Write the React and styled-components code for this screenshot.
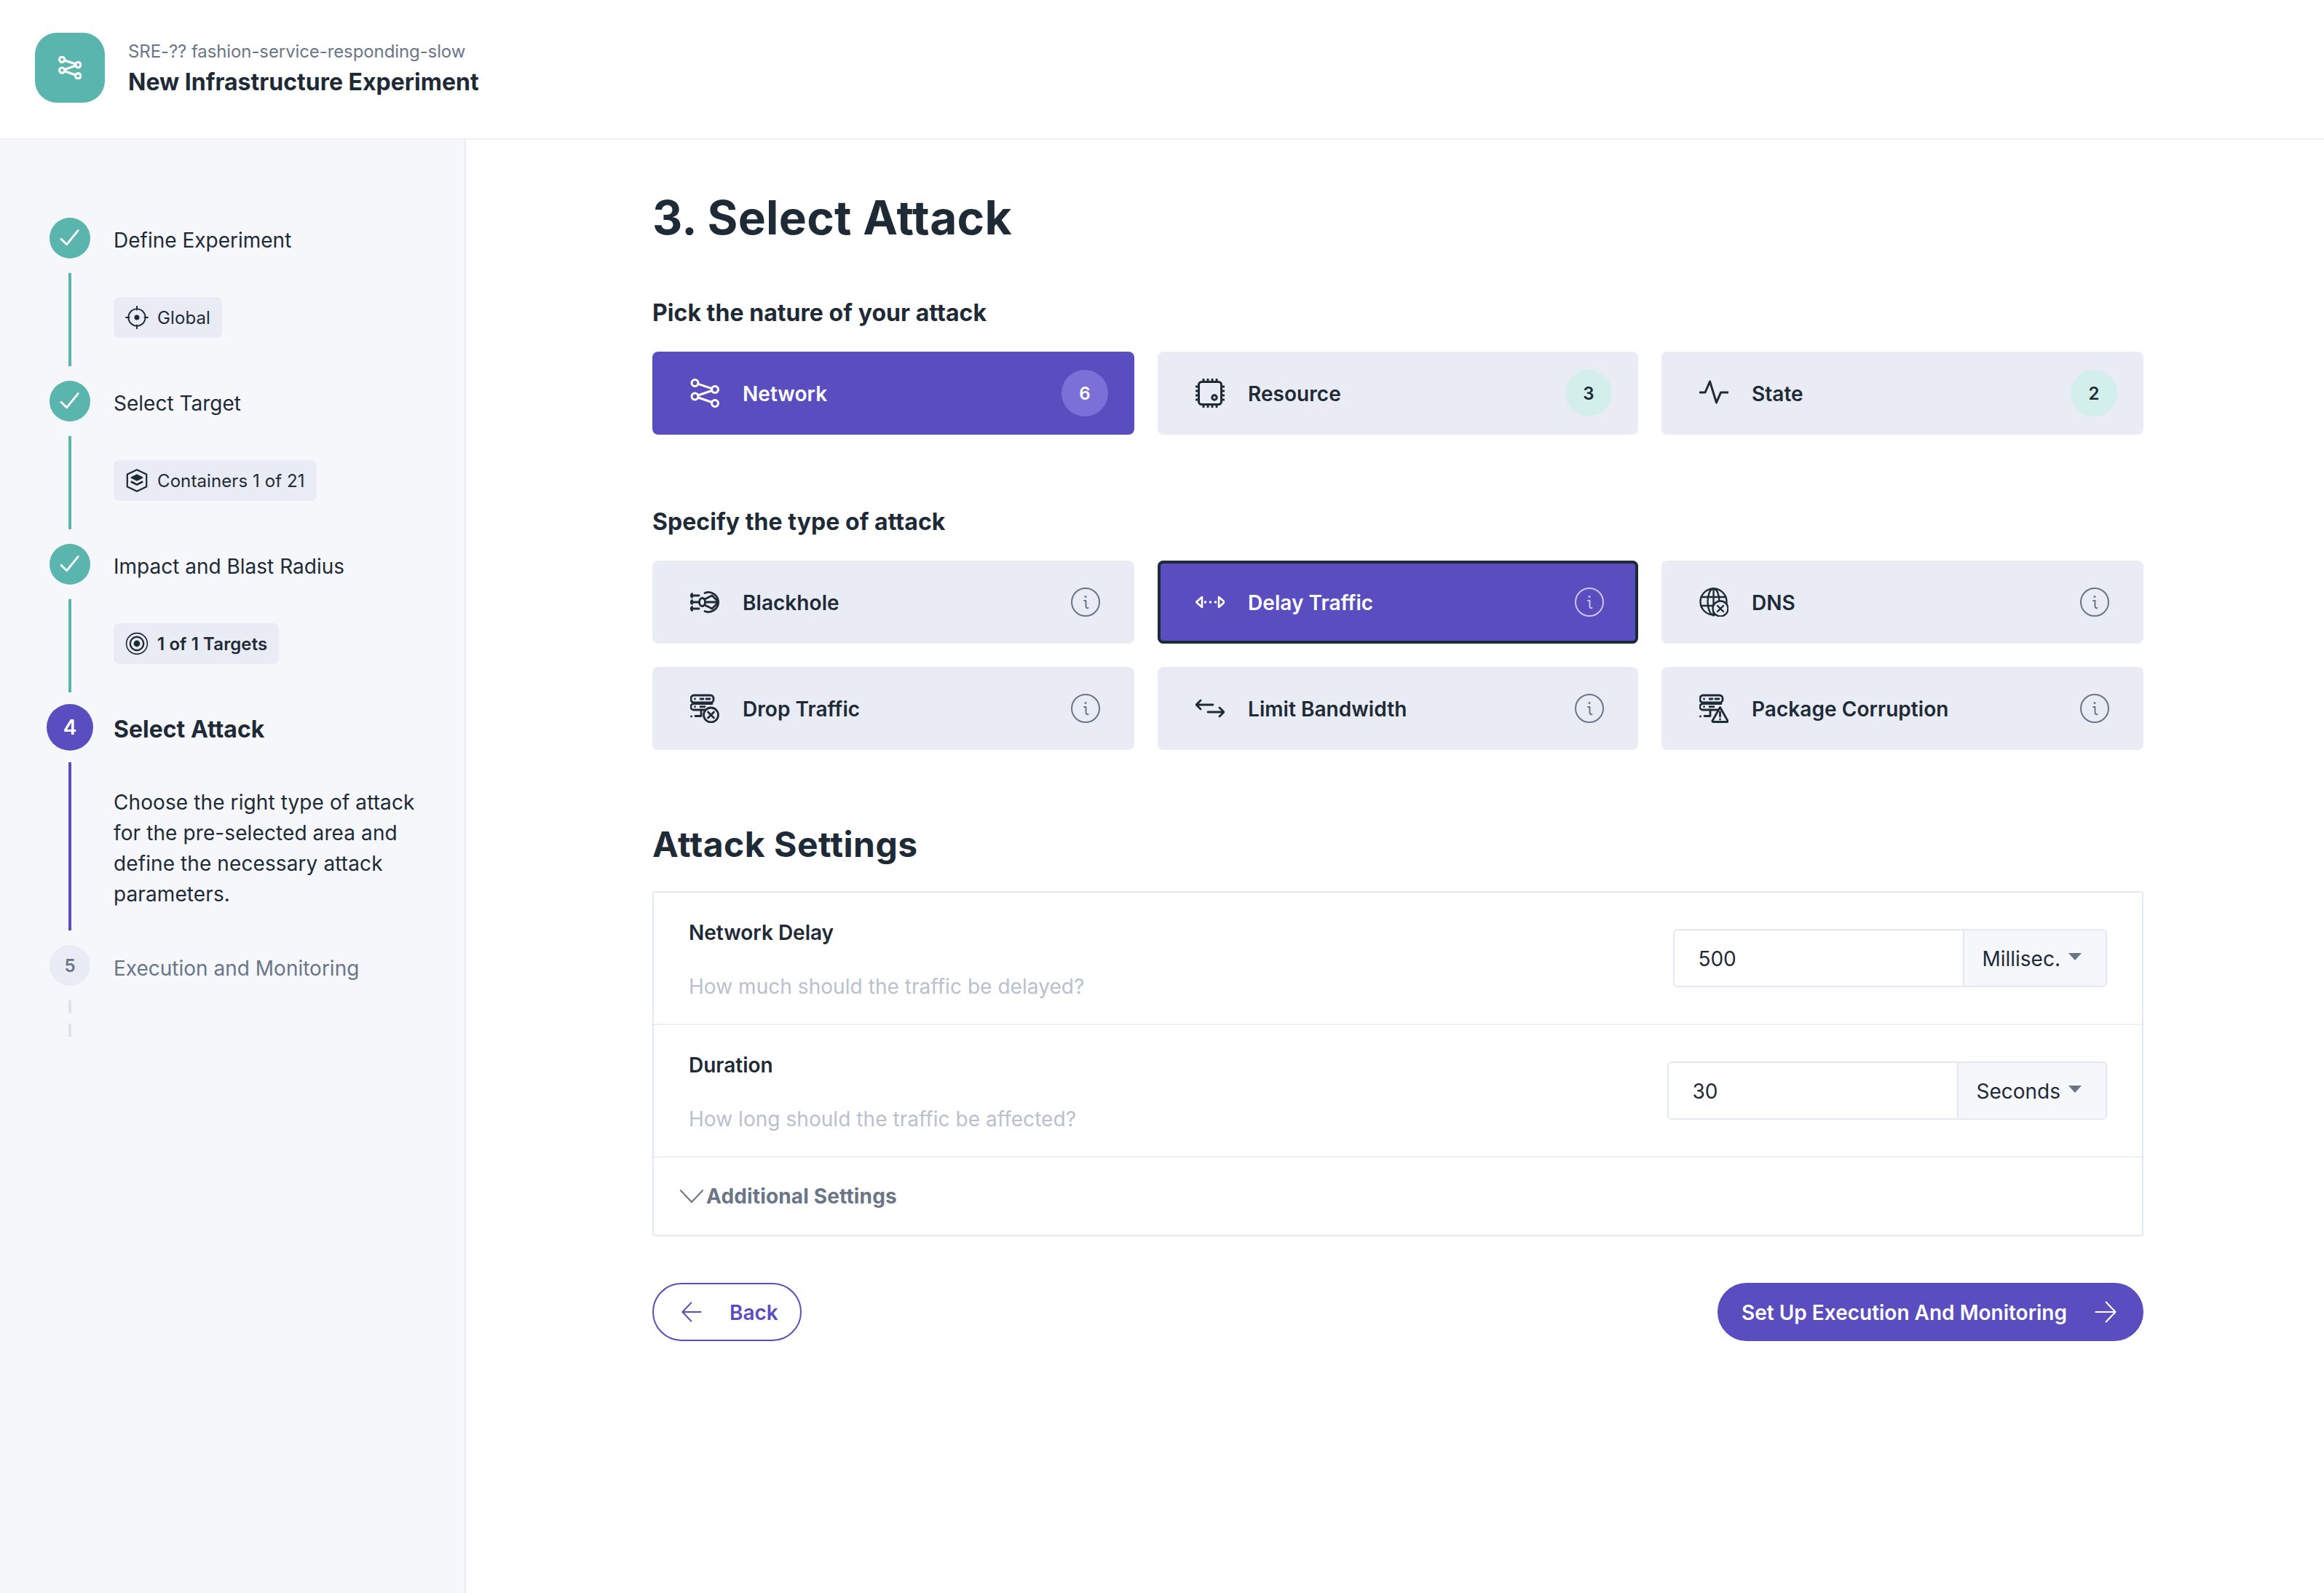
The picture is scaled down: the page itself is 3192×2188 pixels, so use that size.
import React from "react";
import styled, { createGlobalStyle } from "styled-components";

const PURPLE = "#594dc0";
const TEAL = "#5ab5ae";
const INK = "#1f2a37";
const MUTED = "#6a7688";
const CHIP = "#e9ecf4";
const LINE = "#e2e7f1";

const Global = createGlobalStyle`
  html, body { margin: 0; padding: 0; background: #fff; }
  body { font-family: Inter, "Liberation Sans", sans-serif; color: ${INK}; -webkit-font-smoothing: antialiased; }
  * { box-sizing: border-box; }
`;

const Page = styled.div`
  display: flex;
  flex-direction: column;
  width: 3192px;
  height: 2188px;
  overflow: hidden;
`;
const Header = styled.header`
  height: 192px;
  flex: none;
  display: flex;
  align-items: center;
  gap: 32px;
  padding: 0 48px 4px;
  border-bottom: 2px solid #eceff5;
`;
const Logo = styled.div`
  width: 96px;
  height: 96px;
  border-radius: 30px;
  background: ${TEAL};
  display: flex;
  align-items: center;
  justify-content: center;
  color: #fff;
`;
const HeaderText = styled.div`
  display: flex;
  flex-direction: column;
  gap: 5px;
  padding-top: 3px;
`;
const Crumb = styled.div`
  font-size: 24px;
  line-height: 32px;
  letter-spacing: -0.1px;
  color: ${MUTED};
`;
const HeaderTitle = styled.div`
  font-size: 32px;
  line-height: 42px;
  font-weight: 700;
  color: ${INK};
`;
const Body = styled.div`
  flex: 1;
  display: flex;
  min-height: 0;
`;
const Sidebar = styled.aside`
  width: 640px;
  flex: none;
  background: #f5f7fb;
  border-right: 2px solid #e9ecf4;
  padding: 107px 40px 0 64px;
`;
const Step = styled.div`
  display: grid;
  grid-template-columns: 64px 1fr;
  column-gap: 28px;
`;
const StepHead = styled.div`
  height: 56px;
  display: flex;
  align-items: center;
  justify-content: center;
`;
const Circle = styled.div`
  flex: none;
  width: ${(p) => (p.$kind === "active" ? 64 : 56)}px;
  height: ${(p) => (p.$kind === "active" ? 64 : 56)}px;
  border-radius: 50%;
  display: flex;
  align-items: center;
  justify-content: center;
  font-size: ${(p) => (p.$kind === "active" ? 28 : 24)}px;
  font-weight: 600;
  color: ${(p) => (p.$kind === "todo" ? MUTED : "#fff")};
  background: ${(p) =>
    p.$kind === "active" ? PURPLE : p.$kind === "todo" ? CHIP : TEAL};
`;
const StepLabel = styled.div`
  display: flex;
  align-items: center;
  height: 56px;
  padding-top: ${(p) => (p.$active ? 4 : p.$muted ? 8 : 6)}px;
  font-size: ${(p) => (p.$active ? 32 : 28)}px;
  font-weight: ${(p) => (p.$active ? 700 : 400)};
  color: ${(p) => (p.$muted ? MUTED : INK)};
`;
const Rail = styled.div`
  display: flex;
  justify-content: center;
  padding: 20px 0;
`;
const RailLine = styled.div`
  width: 4px;
  background: ${(p) => p.$color};
`;
const DashedRail = styled.div`
  width: 4px;
  height: 50px;
  background: repeating-linear-gradient(to bottom, #dde2ec 0 18px, transparent 18px 32px);
`;
const StepBody = styled.div`
  padding: ${(p) => (p.$desc ? "54px 0 49px" : "53px 0 0")};
  min-height: ${(p) => (p.$desc ? "auto" : "168px")};
`;
const Chip = styled.div`
  display: inline-flex;
  align-items: center;
  gap: 12px;
  height: 56px;
  padding: 0 16px;
  border-radius: 8px;
  background: ${CHIP};
  font-size: 24px;
  letter-spacing: 0.1px;
  font-weight: ${(p) => (p.$strong ? 600 : 400)};
  color: ${INK};
`;
const Desc = styled.div`
  font-size: 28px;
  line-height: 42px;
  letter-spacing: 0.1px;
  color: ${INK};
`;
const Main = styled.main`
  flex: 1;
  padding: 69px 248px 0 256px;
`;
const H1 = styled.h1`
  margin: 0 0 73px;
  font-size: 64px;
  line-height: 76px;
  font-weight: 700;
  letter-spacing: 0.3px;
  color: ${INK};
`;
const SectionLabel = styled.h3`
  margin: ${(p) => (p.$first ? "0" : "100px")} 0 33px;
  font-size: 32px;
  line-height: 40px;
  font-weight: 700;
  letter-spacing: 0.05px;
  color: ${INK};
`;
const CardGrid = styled.div`
  display: grid;
  grid-template-columns: 662px 660px 662px;
  gap: 32px;
`;
const Card = styled.div`
  height: 114px;
  display: flex;
  align-items: center;
  gap: 32px;
  padding: 0 36px 0 52px;
  border-radius: 8px;
  font-size: 28px;
  font-weight: 600;
  background: ${(p) => (p.$active ? PURPLE : CHIP)};
  color: ${(p) => (p.$active ? "#fff" : INK)};
  box-shadow: ${(p) => (p.$outlined ? `inset 0 0 0 4px ${INK}` : "none")};
`;
const CardName = styled.span`
  flex: 1;
  padding-top: 2px;
  letter-spacing: 0.05px;
`;
const Badge = styled.div`
  width: 64px;
  height: 64px;
  border-radius: 50%;
  display: flex;
  align-items: center;
  justify-content: center;
  font-size: 24px;
  font-weight: 600;
  background: ${(p) => (p.$active ? "#7a70d8" : "#d3efec")};
  color: ${(p) => (p.$active ? "#fff" : INK)};
`;
const InfoWrap = styled.div`
  display: flex;
  margin-right: 11px;
  color: ${(p) => (p.$active ? "#c9c5ee" : MUTED)};
`;
const H2 = styled.h2`
  margin: 102px 0 36px;
  font-size: 48px;
  line-height: 56px;
  font-weight: 700;
  letter-spacing: 0.5px;
  color: ${INK};
`;
const SettingsBox = styled.div`
  border: 2px solid ${LINE};
  border-radius: 4px;
`;
const SettingRow = styled.div`
  height: 182px;
  display: flex;
  align-items: center;
  justify-content: space-between;
  padding: 0 48px;
  border-bottom: 2px solid #eceff5;
`;
const SettingText = styled.div`
  display: flex;
  flex-direction: column;
  gap: 38px;
  padding-top: 4px;
`;
const SettingLabel = styled.div`
  font-size: 28px;
  line-height: 36px;
  font-weight: 600;
  color: ${INK};
`;
const SettingHint = styled.div`
  font-size: 28px;
  line-height: 36px;
  letter-spacing: 0.05px;
  color: #b9c0ce;
`;
const InputGroup = styled.div`
  display: flex;
  height: 80px;
  border: 2px solid ${LINE};
  border-radius: 6px;
  font-size: 28px;
  color: ${INK};
`;
const InputValue = styled.div`
  width: 398px;
  display: flex;
  align-items: center;
  padding: 2px 32px 0;
  border-right: 2px solid ${LINE};
`;
const Addon = styled.div`
  display: flex;
  align-items: center;
  gap: 11px;
  padding: 2px 33px 0 24px;
  background: #f5f7fb;
  border-radius: 0 4px 4px 0;
`;
const Caret = styled.span`
  width: 0;
  height: 0;
  margin-top: -6px;
  border-left: 9px solid transparent;
  border-right: 9px solid transparent;
  border-top: 10px solid ${MUTED};
`;
const Additional = styled.div`
  height: 106px;
  display: flex;
  align-items: center;
  gap: 4px;
  padding: 0 0 0 36px;
  font-size: 28px;
  font-weight: 700;
  letter-spacing: 0.15px;
  color: ${MUTED};
`;
const Footer = styled.div`
  display: flex;
  justify-content: space-between;
  margin-top: 64px;
`;
const Button = styled.button`
  height: 80px;
  display: flex;
  align-items: center;
  border-radius: 40px;
  font-family: inherit;
  font-size: 28px;
  font-weight: 600;
  border: 2px solid ${PURPLE};
  gap: 38px;
  padding: ${(p) => (p.$primary ? "0 35px 0 31px" : "0 30px 0 38px")};
  background: ${(p) => (p.$primary ? PURPLE : "#fff")};
  color: ${(p) => (p.$primary ? "#fff" : PURPLE)};
`;
const ButtonLabel = styled.span`
  padding-top: 2px;
`;

const Svg = ({ size = 40, children, fill = "none", sw = 3 }) => (
  <svg
    width={size}
    height={size}
    viewBox="0 0 40 40"
    fill={fill}
    stroke="currentColor"
    strokeWidth={sw}
    strokeLinecap="round"
    strokeLinejoin="round"
    style={{ flex: "none", display: "block" }}
  >
    {children}
  </svg>
);

const NetworkIcon = ({ size, sw }) => (
  <Svg size={size} sw={sw}>
    <circle cx="6.5" cy="6" r="4.5" />
    <circle cx="34" cy="15" r="4.5" />
    <circle cx="6.5" cy="24.5" r="4.5" />
    <circle cx="34" cy="34" r="4.5" />
    <path d="M10.8 7.4 29.7 13.6M29.8 16.5 10.8 23M10.8 26 29.7 32.5" />
  </Svg>
);
const ResourceIcon = () => (
  <Svg>
    <rect x="4.5" y="4.5" width="31" height="31" rx="4" />
    <circle cx="26" cy="26" r="3.2" />
    <path d="M11 1v1.5M17 1v1.5M23 1v1.5M29 1v1.5M11 37.5V39M17 37.5V39M23 37.5V39M29 37.5V39M1 11h1.5M1 17h1.5M1 23h1.5M1 29h1.5M37.5 11H39M37.5 17H39M37.5 23H39M37.5 29H39" />
  </Svg>
);
const StateIcon = () => (
  <Svg>
    <path d="M1 19h7l6.5-15 9 29 6-14H39" />
  </Svg>
);
const BlackholeIcon = () => (
  <Svg sw={2.8}>
    <path d="M1 11h11M1 20h11M1 29h11M2.5 8.5 0.5 11l2 2.5M2.5 17.5l-2 2.5 2 2.5M2.5 26.5l-2 2.5 2 2.5" />
    <ellipse cx="16.5" cy="20" rx="4" ry="5.5" />
    <path d="M20 7.5A13.5 13.5 0 1 1 20 32.5" />
    <path d="M20.5 20H39M30 11l9 9-9 9M20 16l10-5M20 24l10 5" />
  </Svg>
);
const ServerBase = () => (
  <>
    <rect x="1" y="2" width="31" height="10" rx="4" />
    <path d="M30 22H5a4 4 0 0 1 0-8.5h25" />
    <path d="M14 30.5H7M15 22v8.5" />
    <path d="M6.5 7h.01M14 7h4M22 7h5M6.5 17.7h.01M14 17.7h6M1.5 31h.01" />
  </>
);
const DropIcon = () => (
  <Svg sw={2.8}>
    <ServerBase />
    <circle cx="28.5" cy="29" r="10" fill="#e9ecf4" />
    <path d="m24.5 25 8 8M32.5 25l-8 8" />
  </Svg>
);
const PackageIcon = () => (
  <Svg sw={2.8}>
    <ServerBase />
    <path d="M28.5 18.5 39 37a1 1 0 0 1-1 1.5H19a1 1 0 0 1-1-1.5z" fill="#e9ecf4" />
    <path d="M28.5 25v6M28.5 35h.01" />
  </Svg>
);
const DnsIcon = () => (
  <Svg sw={2.4}>
    <circle cx="19.5" cy="19.5" r="18" />
    <ellipse cx="19.5" cy="19.5" rx="8" ry="18" />
    <path d="M19.5 1.5v37M2.5 13h34M2 25h34" />
    <circle cx="29" cy="29" r="10.5" fill="#e9ecf4" />
    <path d="m25 25 8 8M33 25l-8 8" />
  </Svg>
);
const DelayIcon = () => (
  <Svg sw={2.6}>
    <path d="M9 13v14l-8-7zM32 13v14l8-7z" />
    <path d="M13.5 20h.01M20.5 20h.01M27.5 20h.01" strokeWidth="3.6" />
  </Svg>
);
const LimitIcon = () => (
  <Svg sw={2.8}>
    <path d="M1 15h23M7 9l-6 6 6 6M17 25h22M33 19l6 6-6 6" />
  </Svg>
);
const InfoIcon = () => (
  <Svg sw={2}>
    <ellipse cx="20" cy="20" rx="19" ry="19" />
    <path d="M18 18h2.5v7.5c0 2 1.2 3 3 2.5" />
    <path d="M20 12.5h.01" strokeWidth="3" />
  </Svg>
);
const CheckIcon = () => (
  <Svg size={32} sw={3.6}>
    <path d="M5 21.5 14.5 31 34 7" />
  </Svg>
);
const GlobalIcon = () => (
  <Svg size={32} sw={2.4}>
    <circle cx="20" cy="20" r="14.5" />
    <circle cx="20" cy="20" r="3.2" fill="currentColor" />
    <path d="M20 1v6M20 33v6M1 20h6M33 20h6" />
  </Svg>
);
const ContainerIcon = () => (
  <Svg size={32} sw={2.8}>
    <path d="M20 1.5 36.5 9.5v21L20 38.5l-16.5-8v-21z" />
    <path d="M20 10.5 29 15l-9 4.5-9-4.5z" fill="currentColor" />
    <path d="m11 22.5 9 4.5 9-4.5" strokeWidth="3.4" />
  </Svg>
);
const TargetIcon = () => (
  <Svg size={32} sw={2}>
    <circle cx="20" cy="20" r="18" />
    <circle cx="20" cy="20" r="11.5" strokeWidth="3" />
    <circle cx="20" cy="20" r="4.5" fill="currentColor" />
  </Svg>
);
const ChevronIcon = () => (
  <Svg size={32} sw={2.6}>
    <path d="M1 10 20 30 39 10" />
  </Svg>
);
const ArrowLeft = () => (
  <Svg size={28} sw={3}>
    <path d="M38 20H3M19 2 2 20l17 18" />
  </Svg>
);
const ArrowRight = () => (
  <Svg size={30} sw={2.8}>
    <path d="M2 20h35M21 2l17 18-17 18" />
  </Svg>
);

const natures = [
  { name: "Network", icon: <NetworkIcon />, count: 6, active: true },
  { name: "Resource", icon: <ResourceIcon />, count: 3 },
  { name: "State", icon: <StateIcon />, count: 2 },
];
const types = [
  { name: "Blackhole", icon: <BlackholeIcon /> },
  { name: "Delay Traffic", icon: <DelayIcon />, active: true, outlined: true },
  { name: "DNS", icon: <DnsIcon /> },
  { name: "Drop Traffic", icon: <DropIcon /> },
  { name: "Limit Bandwidth", icon: <LimitIcon /> },
  { name: "Package Corruption", icon: <PackageIcon /> },
];
const doneSteps = [
  { label: "Define Experiment", chip: "Global", icon: <GlobalIcon /> },
  { label: "Select Target", chip: "Containers 1 of 21", icon: <ContainerIcon /> },
  { label: "Impact and Blast Radius", chip: "1 of 1 Targets", icon: <TargetIcon />, strong: true },
];
const settings = [
  { label: "Network Delay", hint: "How much should the traffic be delayed?", value: "500", unit: "Millisec." },
  { label: "Duration", hint: "How long should the traffic be affected?", value: "30", unit: "Seconds" },
];

export default function App() {
  return (
    <Page>
      <Global />
      <Header>
        <Logo>
          <NetworkIcon size={32} sw={4} />
        </Logo>
        <HeaderText>
          <Crumb>SRE-?? fashion-service-responding-slow</Crumb>
          <HeaderTitle>New Infrastructure Experiment</HeaderTitle>
        </HeaderText>
      </Header>
      <Body>
        <Sidebar>
          {doneSteps.map((s) => (
            <Step key={s.label}>
              <StepHead>
                <Circle>
                  <CheckIcon />
                </Circle>
              </StepHead>
              <StepLabel>{s.label}</StepLabel>
              <Rail>
                <RailLine $color={TEAL} />
              </Rail>
              <StepBody>
                <Chip $strong={s.strong}>
                  {s.icon}
                  {s.chip}
                </Chip>
              </StepBody>
            </Step>
          ))}
          <Step>
            <StepHead>
              <Circle $kind="active">4</Circle>
            </StepHead>
            <StepLabel $active>Select Attack</StepLabel>
            <Rail>
              <RailLine $color={PURPLE} />
            </Rail>
            <StepBody $desc>
              <Desc>
                Choose the right type of attack for the pre-selected area and define the necessary attack parameters.
              </Desc>
            </StepBody>
          </Step>
          <Step>
            <StepHead>
              <Circle $kind="todo">5</Circle>
            </StepHead>
            <StepLabel $muted>Execution and Monitoring</StepLabel>
            <Rail>
              <DashedRail />
            </Rail>
          </Step>
        </Sidebar>
        <Main>
          <H1>3. Select Attack</H1>
          <SectionLabel $first>Pick the nature of your attack</SectionLabel>
          <CardGrid>
            {natures.map((n) => (
              <Card key={n.name} $active={n.active}>
                {n.icon}
                <CardName>{n.name}</CardName>
                <Badge $active={n.active}>{n.count}</Badge>
              </Card>
            ))}
          </CardGrid>
          <SectionLabel>Specify the type of attack</SectionLabel>
          <CardGrid>
            {types.map((t) => (
              <Card key={t.name} $active={t.active} $outlined={t.outlined}>
                {t.icon}
                <CardName>{t.name}</CardName>
                <InfoWrap $active={t.active}>
                  <InfoIcon />
                </InfoWrap>
              </Card>
            ))}
          </CardGrid>
          <H2>Attack Settings</H2>
          <SettingsBox>
            {settings.map((s) => (
              <SettingRow key={s.label}>
                <SettingText>
                  <SettingLabel>{s.label}</SettingLabel>
                  <SettingHint>{s.hint}</SettingHint>
                </SettingText>
                <InputGroup>
                  <InputValue>{s.value}</InputValue>
                  <Addon>
                    {s.unit}
                    <Caret />
                  </Addon>
                </InputGroup>
              </SettingRow>
            ))}
            <Additional>
              <ChevronIcon />
              Additional Settings
            </Additional>
          </SettingsBox>
          <Footer>
            <Button>
              <ArrowLeft />
              <ButtonLabel>Back</ButtonLabel>
            </Button>
            <Button $primary>
              <ButtonLabel>Set Up Execution And Monitoring</ButtonLabel>
              <ArrowRight />
            </Button>
          </Footer>
        </Main>
      </Body>
    </Page>
  );
}
